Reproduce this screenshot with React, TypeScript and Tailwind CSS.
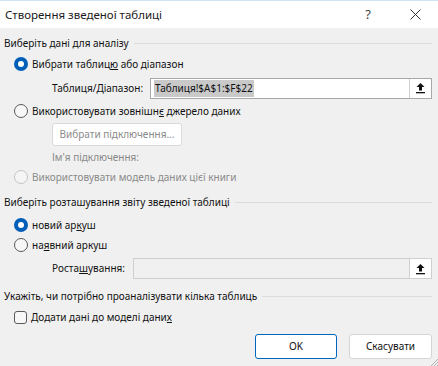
import React from "react";

const font = { fontFamily: '"Noto Sans", "Open Sans", sans-serif' };

const Radio = ({ checked, disabled }: { checked?: boolean; disabled?: boolean }) =>
  checked ? (
    <span className="w-[14px] h-[14px] rounded-full bg-[#005fb8] flex items-center justify-center shrink-0">
      <span className="w-[6px] h-[6px] rounded-full bg-white" />
    </span>
  ) : (
    <span
      className={`w-[14px] h-[14px] rounded-full border shrink-0 ${
        disabled ? "border-[#c4c4c4] bg-[#f5f5f5]" : "border-[#5a5a5a] bg-[#f7f7f7]"
      }`}
    />
  );

const UploadIcon = () => (
  <svg width="11" height="12" viewBox="0 0 11 12">
    <path d="M5.5 1 L1.5 5 H4 V8.5 H7 V5 H9.5 Z" fill="#111" />
    <rect x="1" y="10" width="9" height="1.3" fill="#111" />
  </svg>
);

const Header = ({ text, className }: { text: string; className: string }) => (
  <div className={`flex items-center gap-[5px] ${className}`}>
    <span className="whitespace-nowrap">{text}</span>
    <span className="flex-1 h-px bg-[#dcdcdc]" />
  </div>
);

export default function App() {
  return (
    <div className="w-[438px] h-[366px] bg-[#f0f0f0] text-[10px] text-[#111] relative overflow-hidden whitespace-nowrap" style={font}>
      {/* title bar */}
      <div className="h-[28px] bg-white border-t border-[#cfe3f2] flex items-center pl-[5px]">
        <span className="text-[11.5px] text-[#1a1a1a] flex-1">Створення зведеної таблиці</span>
        <span className="text-[13px] text-[#444] w-[20px] mr-[32px] text-center">?</span>
        <svg width="11" height="11" viewBox="0 0 11 11" className="mr-[17px]">
          <path d="M0.5 0.5 L10.5 10.5 M10.5 0.5 L0.5 10.5" stroke="#333" strokeWidth="1" />
        </svg>
      </div>

      <div className="flex flex-col pl-[4px] pr-[6px] pt-[5px]">
        <Header text="Виберіть дані для аналізу" className="h-[20px]" />

        <div className="h-[22px] flex items-center gap-[4px] pl-[10px]">
          <Radio checked />
          <span>
            Вибрати таблиц<u>ю</u> або діапазон
          </span>
        </div>

        <div className="h-[26px] flex items-center pl-[48px]">
          <span className="w-[98px]">Таблиця/Діапазон:</span>
          <div className="flex-1 h-[21px] bg-white border border-[#a8a8a8] flex items-center">
            <span className="ml-[3px] bg-[#c9c9c9] px-[1px] leading-[17px]">Таблиця!$A$1:$F$22</span>
            <span className="flex-1" />
            <span className="w-[22px] h-full border-l border-[#d0d0d0] flex items-center justify-center">
              <UploadIcon />
            </span>
          </div>
        </div>

        <div className="h-[20px] flex items-center gap-[4px] pl-[10px]">
          <Radio />
          <span>
            Використовувати зовнішн<u>є</u> джерело даних
          </span>
        </div>

        <div className="pl-[48px] mt-[2px]">
          <div className="w-[130px] h-[23px] bg-white border border-[#dadada] rounded-[3px] flex items-center justify-center text-[#8a8a8a]">
            Вибрати підключення...
          </div>
        </div>

        <div className="h-[22px] flex items-center pl-[48px] text-[#8a8a8a]">Ім'я підключення:</div>

        <div className="h-[18px] flex items-center gap-[4px] pl-[10px] text-[#8a8a8a]">
          <Radio disabled />
          <span>Використовувати модель даних цієї книги</span>
        </div>

        <Header text="Виберіть розташування звіту зведеної таблиці" className="h-[32px]" />

        <div className="h-[14px] flex items-center gap-[4px] pl-[10px]">
          <Radio checked />
          <span>
            новий ар<u>к</u>уш
          </span>
        </div>

        <div className="h-[26px] flex items-center gap-[4px] pl-[10px]">
          <Radio />
          <span>
            на<u>я</u>вний аркуш
          </span>
        </div>

        <div className="h-[21px] flex items-center pl-[48px]">
          <span className="w-[81px]">
            Роста<u>ш</u>ування:
          </span>
          <div className="flex-1 h-[21px] bg-[#f0f0f0] border border-[#cfcfcf] flex items-center">
            <span className="flex-1" />
            <span className="w-[22px] h-full bg-white border-l border-[#d0d0d0] flex items-center justify-center">
              <UploadIcon />
            </span>
          </div>
        </div>

        <Header text="Укажіть, чи потрібно проаналізувати кілька таблиць" className="h-[20px] mt-[7px]" />

        <div className="h-[22px] flex items-center gap-[4px] pl-[10px]">
          <span className="w-[13px] h-[13px] rounded-[3px] border border-[#5a5a5a] bg-[#f7f7f7]" />
          <span>
            Додати дані до моделі дани<u>х</u>
          </span>
        </div>

        <div className="flex justify-end gap-[12px] mt-[6px]">
          <button className="w-[82px] h-[25px] bg-white border border-[#0067c0] rounded-[3px] text-[10px] text-[#111]">
            OK
          </button>
          <button className="w-[83px] h-[25px] bg-white border border-[#d5d5d5] rounded-[3px] text-[10px] text-[#111]">
            Скасувати
          </button>
        </div>
      </div>

      {/* resize grip */}
      <svg width="8" height="8" viewBox="0 0 8 8" className="absolute right-0 bottom-0">
        <path d="M8 1 L1 8 M8 4 L4 8 M8 7 L7 8" stroke="#b0b0b0" strokeWidth="1" />
      </svg>
    </div>
  );
}
